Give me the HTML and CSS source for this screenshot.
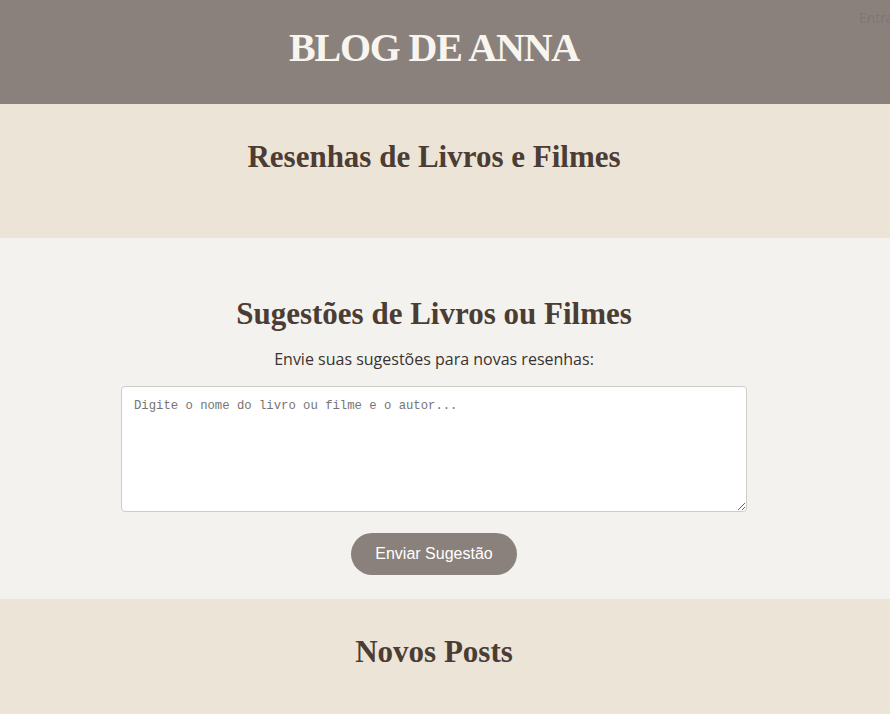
FILE: index.html
```html
<!DOCTYPE html>
<html lang="pt-BR">
<head>
<meta charset="utf-8">
<title>Blog de Anna</title>
<link rel="stylesheet" href="styles.css">
</head>
<body>
<header class="site-header">
  <h1 class="site-title">BLOG DE ANNA</h1>
  <nav class="site-nav"><a href="#">Entrar</a></nav>
</header>
<section class="band band-intro">
  <h2 class="band-title">Resenhas de Livros e Filmes</h2>
</section>
<section class="band band-suggest">
  <h2 class="band-title">Sugestões de Livros ou Filmes</h2>
  <p class="suggest-text">Envie suas sugestões para novas resenhas:</p>
  <form class="suggest-form">
    <textarea class="suggest-input" placeholder="Digite o nome do livro ou filme e o autor..."></textarea>
    <button type="button" class="suggest-button">Enviar Sugestão</button>
  </form>
</section>
<section class="band band-posts">
  <h2 class="band-title">Novos Posts</h2>
</section>
</body>
</html>
```
FILE: styles.css
```css
html, body {
  margin: 0;
  padding: 0;
}
body {
  font-family: "Open Sans", "Liberation Sans", sans-serif;
  background: #ede4d8;
  color: #3d3430;
  overflow: hidden;
}
.site-header {
  position: relative;
  background: #8b817c;
  height: 104px;
  box-sizing: border-box;
  padding: 0 22px 8px 0;
  display: flex;
  align-items: center;
  justify-content: center;
}
.site-title {
  margin: 0;
  font-family: "Liberation Serif", serif;
  font-weight: 700;
  font-size: 40px;
  letter-spacing: -1.2px;
  color: #f8f5f0;
  line-height: 1;
}
.site-nav {
  position: absolute;
  top: 6px;
  left: 859px;
  white-space: nowrap;
}
.site-nav a {
  color: #7f7672;
  text-decoration: none;
  font-size: 14px;
}
.band {
  display: flex;
  flex-direction: column;
  align-items: center;
}
.band-title {
  margin: 0;
  font-family: "Liberation Serif", serif;
  font-weight: 700;
  font-size: 31px;
  color: #4b3d34;
  line-height: 1.2;
}
.band-intro {
  background: #ede4d8;
  padding: 34px 42px 63px 20px;
}
.band-suggest {
  background: #f4f2ee;
  padding: 57px 42px 24px 20px;
}
.suggest-text {
  margin: 16px 0 16px;
  font-size: 16px;
  color: #3a3230;
}
.suggest-form {
  display: flex;
  flex-direction: column;
  align-items: center;
  gap: 21px;
}
.suggest-input {
  width: 600px;
  height: 100px;
  padding: 12px;
  border: 1px solid #cfcbc8;
  border-radius: 4px;
  background: #fff;
  font-family: "Liberation Mono", "DejaVu Sans Mono", monospace;
  font-size: 12.25px;
  resize: vertical;
  margin: 0;
  display: block;
}
.suggest-input::placeholder {
  color: #757575;
}
.suggest-button {
  width: 166px;
  height: 42px;
  border: none;
  border-radius: 21px;
  background: #8b817c;
  color: #fff;
  font-family: "Liberation Sans", Arial, sans-serif;
  font-size: 16px;
  cursor: pointer;
}
.band-posts {
  background: #ede4d8;
  padding: 34px 42px 40px 20px;
}
```
